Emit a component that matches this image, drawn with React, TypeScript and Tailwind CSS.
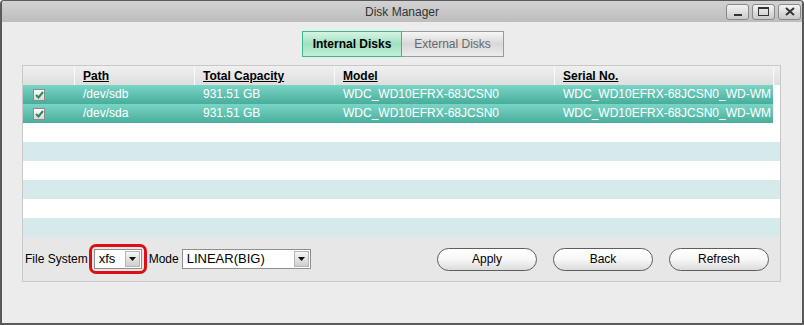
import React from "react";

const font = "font-['Liberation_Sans',Arial,sans-serif]";

const disks = [
	{ path: "/dev/sdb", capacity: "931.51 GB", model: "WDC_WD10EFRX-68JCSN0", serial: "WDC_WD10EFRX-68JCSN0_WD-WM" },
	{ path: "/dev/sda", capacity: "931.51 GB", model: "WDC_WD10EFRX-68JCSN0", serial: "WDC_WD10EFRX-68JCSN0_WD-WM" },
];

const cols = "grid grid-cols-[51px_120px_140px_220px_219px_7px]";

function WinButton({ children }: { children: React.ReactNode }) {
	return (
		<div className="flex h-[16px] w-[23px] items-center justify-center rounded-[3px] border border-[#8a8a8a] bg-gradient-to-b from-[#f4f4f4] to-[#c9c9c9]">
			{children}
		</div>
	);
}

function Check() {
	return (
		<div className="flex h-[12px] w-[12px] items-center justify-center border border-[#8c8c8c] bg-gradient-to-b from-[#ffffff] to-[#d9d9d9]">
			<svg width="9" height="8" viewBox="0 0 9 8">
				<path d="M1 4 L3.5 6.5 L8 1" fill="none" stroke="#2e8b4e" strokeWidth="2" />
			</svg>
		</div>
	);
}

function Select({ value, width }: { value: string; width: string }) {
	return (
		<div className={`flex h-[20px] ${width} items-center border border-[#8f8f8f] bg-white`}>
			<span className="flex-1 pl-[4px] text-[13px] text-black">{value}</span>
			<div className="mr-[1px] flex h-[16px] w-[15px] items-center justify-center border border-[#b5b5b5] bg-gradient-to-b from-[#f6f6f6] to-[#cfcfcf]">
				<svg width="7" height="4" viewBox="0 0 7 4">
					<path d="M0 0 H7 L3.5 4 Z" fill="#111" />
				</svg>
			</div>
		</div>
	);
}

function PillButton({ label }: { label: string }) {
	return (
		<button className="h-[23px] w-[100px] rounded-full border border-[#5e5e5e] bg-gradient-to-b from-[#ffffff] via-[#f7f7f7] to-[#dcdcdc] text-[12px] text-black">
			{label}
		</button>
	);
}

export default function App() {
	return (
		<div className={`h-[325px] w-[804px] bg-white ${font}`}>
			<div className="flex h-full flex-col overflow-hidden rounded-t-[4px] border-x-2 border-b-2 border-t border-[#5a5a5a] bg-[#ececec]">
				{/* Title Bar */}
				<div className="grid h-[21px] grid-cols-[1fr_auto_1fr] items-center bg-gradient-to-b from-[#d2d2d2] to-[#bdbdbd]">
					<div />
					<span className="text-[12px] text-[#333]">Disk Manager</span>
					<div className="flex justify-end gap-[3px] pr-[1px]">
						<WinButton>
							<div className="mt-[6px] h-[2px] w-[8px] bg-[#333]" />
						</WinButton>
						<WinButton>
							<div className="h-[9px] w-[11px] border border-t-2 border-[#333]" />
						</WinButton>
						<WinButton>
							<svg width="10" height="9" viewBox="0 0 10 9">
								<path d="M1 1 L9 8 M9 1 L1 8" stroke="#333" strokeWidth="2" />
							</svg>
						</WinButton>
					</div>
				</div>

				{/* Tabs */}
				<div className="mt-[9px] flex justify-center pl-[2px]">
					<div className="flex h-[26px] w-[100px] items-center justify-center border border-[#3cb98a] bg-gradient-to-b from-[#d6f4e4] via-[#9fe0bf] to-[#c4eed8] text-[12px] font-bold text-black">
						Internal Disks
					</div>
					<div className="flex h-[26px] w-[102px] items-center justify-center border border-l-0 border-[#9a9a9a] bg-gradient-to-b from-[#f6f6f6] via-[#d8d8d8] to-[#ececec] text-[12px] text-[#6a6a6a]">
						External Disks
					</div>
				</div>

				{/* Panel */}
				<div className="ml-[20px] mr-[21px] mt-[8px] flex h-[217px] flex-col border border-[#c8c8c8]">
					<div className={`${cols} h-[19px] bg-gradient-to-b from-[#f0f0f0] to-[#dedede] text-[12px] font-bold text-black`}>
						<div />
						<div className="border-l border-[#fafafa] pl-[8px] leading-[20px] underline">Path</div>
						<div className="border-l border-[#fafafa] pl-[8px] leading-[20px] underline">Total Capacity</div>
						<div className="border-l border-[#fafafa] pl-[8px] leading-[20px] underline">Model</div>
						<div className="border-l border-[#fafafa] pl-[8px] leading-[20px] underline">Serial No.</div>
						<div className="border-l border-[#fafafa]" />
					</div>

					{disks.map((d) => (
						<div key={d.path} className={`${cols} h-[19px] bg-white text-[12px] leading-[19px] text-white`}>
							<div className="flex items-center bg-gradient-to-b from-[#7ad5c5] to-[#48ad9c] pl-[10px]">
								<Check />
							</div>
							<div className="bg-gradient-to-b from-[#7ad5c5] to-[#48ad9c] pl-[9px]">{d.path}</div>
							<div className="bg-gradient-to-b from-[#7ad5c5] to-[#48ad9c] pl-[9px]">{d.capacity}</div>
							<div className="bg-gradient-to-b from-[#7ad5c5] to-[#48ad9c] pl-[9px]">{d.model}</div>
							<div className="overflow-hidden whitespace-nowrap bg-gradient-to-b from-[#7ad5c5] to-[#48ad9c] pl-[9px]">{d.serial}</div>
							<div />
						</div>
					))}

					{[0, 1, 2, 3, 4, 5].map((i) => (
						<div key={i} className={`h-[19px] ${i % 2 === 0 ? "bg-white" : "bg-[#d6eaec]"}`} />
					))}

					{/* Bottom Bar */}
					<div className="flex flex-1 items-center bg-[#e7e7e7] pl-[2px] pr-[11px] text-[12px] text-black">
						<span>File System</span>
						<div className="ml-[1px] rounded-[7px] border-[3px] border-[#dd0f14] p-[2px]">
							<Select value="xfs" width="w-[48px]" />
						</div>
						<span className="ml-[2px]">Mode</span>
						<div className="ml-[3px]">
							<Select value="LINEAR(BIG)" width="w-[129px]" />
						</div>
						<div className="ml-auto flex gap-[16px]">
							<PillButton label="Apply" />
							<PillButton label="Back" />
							<PillButton label="Refresh" />
						</div>
					</div>
				</div>
			</div>
		</div>
	);
}
